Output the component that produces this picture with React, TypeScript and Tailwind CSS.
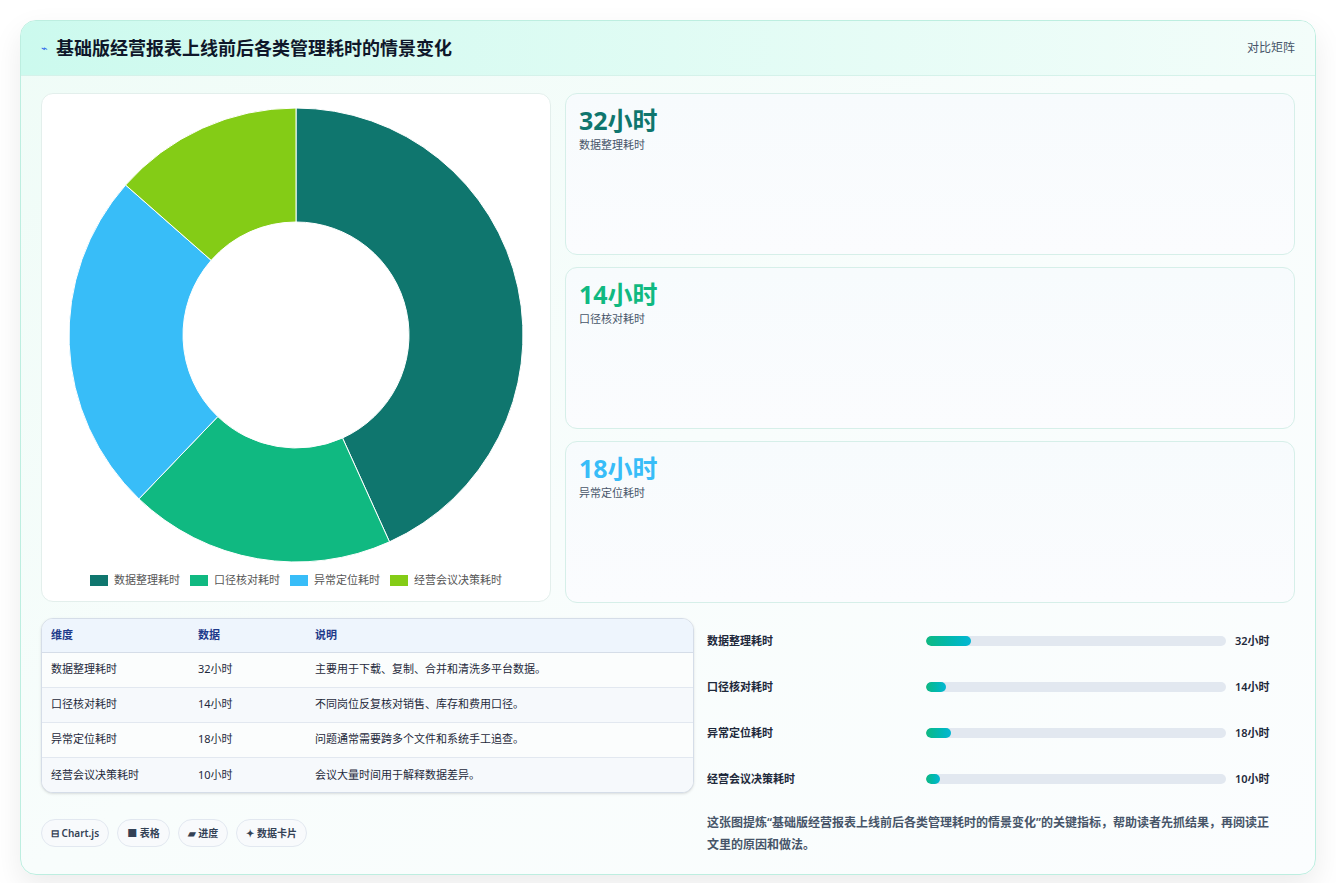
import React from "react";

const data = [
  { name: "数据整理耗时", v: 32, c: "#0f766e", desc: "主要用于下载、复制、合并和清洗多平台数据。", pct: 15 },
  { name: "口径核对耗时", v: 14, c: "#10b981", desc: "不同岗位反复核对销售、库存和费用口径。", pct: 6.6 },
  { name: "异常定位耗时", v: 18, c: "#38bdf8", desc: "问题通常需要跨多个文件和系统手工追查。", pct: 8.3 },
  { name: "经营会议决策耗时", v: 10, c: "#84cc16", desc: "会议大量时间用于解释数据差异。", pct: 4.7 },
];

function Donut() {
  const total = data.reduce((s, d) => s + d.v, 0);
  const R = 227, r = 113, cx = 230, cy = 230;
  let a = -Math.PI / 2;
  const paths = data.map((d) => {
    const a2 = a + (d.v / total) * Math.PI * 2;
    const large = a2 - a > Math.PI ? 1 : 0;
    const p = (rad: number, ang: number) => `${cx + rad * Math.cos(ang)} ${cy + rad * Math.sin(ang)}`;
    const dd = `M ${p(R, a)} A ${R} ${R} 0 ${large} 1 ${p(R, a2)} L ${p(r, a2)} A ${r} ${r} 0 ${large} 0 ${p(r, a)} Z`;
    a = a2;
    return <path key={d.name} d={dd} fill={d.c} stroke="#fff" strokeWidth="1" />;
  });
  return (
    <svg width="460" height="460" viewBox="0 0 460 460">
      {paths}
    </svg>
  );
}

export default function App() {
  const font = { fontFamily: '"Noto Sans", "Noto Sans CJK SC", sans-serif' };
  return (
    <div className="min-h-[883px] bg-white p-5 pb-5" style={font}>
      <div className="rounded-2xl border border-[#bdeee0] bg-gradient-to-br from-[#effcf7] via-[#f8fdfc] to-[#fbfdfe] shadow-[0_12px_30px_rgba(0,0,0,0.08)] overflow-hidden">
        <div className="h-[55px] flex items-center justify-between px-5 bg-gradient-to-r from-[#ccfaee] to-[#f3fdfa] border-b border-[#d5f2ea]">
          <div className="flex items-center gap-2">
            <span className="text-[#2563eb] text-[11px]">⌁</span>
            <h1 className="text-[18px] font-bold text-[#0f172a]">基础版经营报表上线前后各类管理耗时的情景变化</h1>
          </div>
          <span className="text-[12px] text-[#475569]">对比矩阵</span>
        </div>
        <div className="px-5 pt-[17px] pb-[18px]">
          <div className="flex gap-[14px]">
            <div className="w-[510px] h-[509px] shrink-0 rounded-xl border border-[#e3efec] bg-white flex flex-col items-center pt-[11px]">
              <Donut />
              <div className="flex gap-[10px] mt-[7px] text-[11px] text-[#555]">
                {data.map((d) => (
                  <div key={d.name} className="flex items-center gap-[6px]">
                    <span className="w-[18px] h-[11px]" style={{ background: d.c }} />
                    {d.name}
                  </div>
                ))}
              </div>
            </div>
            <div className="flex-1 flex flex-col gap-3">
              {data.slice(0, 3).map((d) => (
                <div key={d.name} className="h-[162px] rounded-xl border border-[#d6efe9] bg-gradient-to-b from-[#f7fbfd] to-[#fbfcfe] px-[13px] pt-[10px]">
                  <div className="text-[25px] font-bold leading-[32px]" style={{ color: d.c }}>{d.v}小时</div>
                  <div className="text-[11px] text-[#475569] mt-[1px]">{d.name}</div>
                </div>
              ))}
            </div>
          </div>
          <div className="flex gap-[13px] mt-[15px]">
            <div className="w-[653px] shrink-0">
              <div className="rounded-xl border border-[#d5dde8] overflow-hidden bg-white shadow-sm">
                <table className="w-full text-[11px] text-[#1e293b]">
                  <thead>
                    <tr className="bg-[#eef5fd] text-[#1e3a8a] h-[33px] text-left border-b border-[#d5dde8]">
                      <th className="font-semibold pl-[9px] w-[156px]">维度</th>
                      <th className="font-semibold w-[117px]">数据</th>
                      <th className="font-semibold">说明</th>
                    </tr>
                  </thead>
                  <tbody>
                    {data.map((d, i) => (
                      <tr key={d.name} className={`h-[35px] ${i % 2 ? "bg-[#f6f9fc]" : "bg-[#fbfdfd]"} ${i < 3 ? "border-b border-[#e2e8f0]" : ""}`}>
                        <td className="pl-[9px]">{d.name}</td>
                        <td>{d.v}小时</td>
                        <td>{d.desc}</td>
                      </tr>
                    ))}
                  </tbody>
                </table>
              </div>
              <div className="flex gap-2 mt-[26px] text-[10px] font-semibold text-[#334155]">
                {["⊟ Chart.js", "■ 表格", "▰ 进度", "✦ 数据卡片"].map((t) => (
                  <span key={t} className="h-[28px] px-[9px] rounded-full border border-[#e2e8f0] bg-[#f8fafc] flex items-center">{t}</span>
                ))}
              </div>
            </div>
            <div className="flex-1 pr-4">
              <div className="flex flex-col">
                {data.map((d) => (
                  <div key={d.name} className="h-[46px] flex items-center text-[11px] font-semibold text-[#1e293b]">
                    <span className="w-[219px]">{d.name}</span>
                    <div className="w-[300px] h-[10px] rounded-full bg-[#e2e8f0] overflow-hidden">
                      <div className="h-full rounded-full bg-gradient-to-r from-[#10b981] to-[#06b6d4]" style={{ width: `${d.pct}%` }} />
                    </div>
                    <span className="ml-[9px]">{d.v}小时</span>
                  </div>
                ))}
              </div>
              <p className="mt-[10px] text-[12px] leading-[22px] text-[#475569] font-semibold">
                这张图提炼“基础版经营报表上线前后各类管理耗时的情景变化”的关键指标，帮助读者先抓结果，再阅读正文里的原因和做法。
              </p>
            </div>
          </div>
        </div>
      </div>
    </div>
  );
}
